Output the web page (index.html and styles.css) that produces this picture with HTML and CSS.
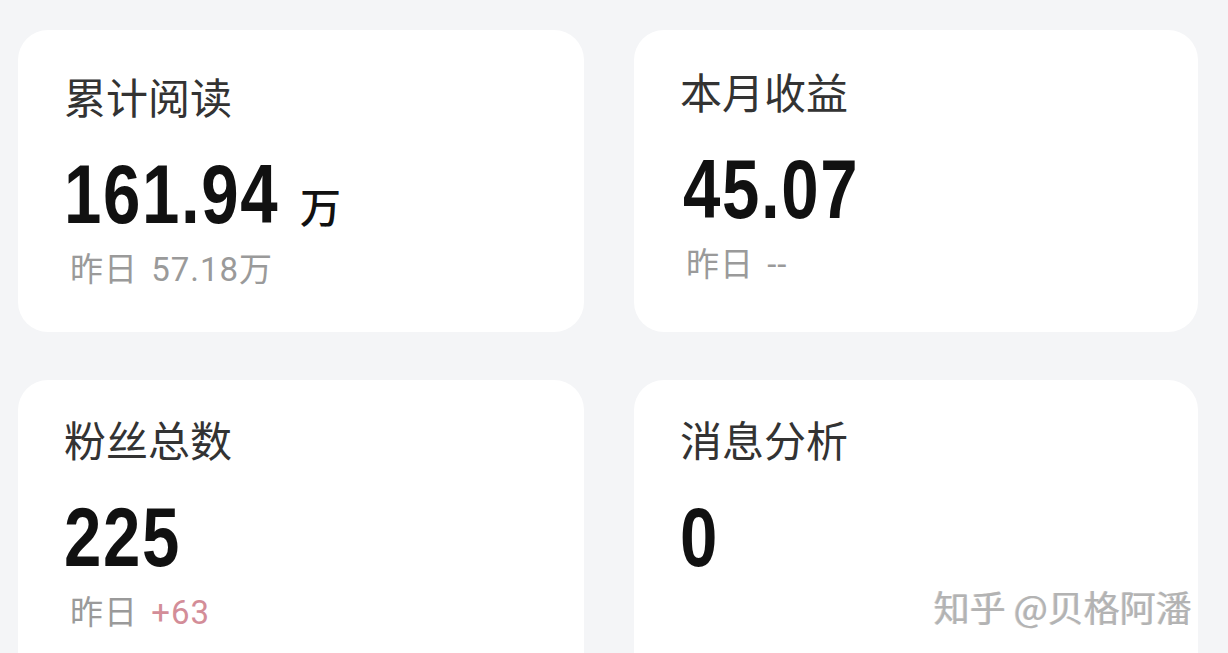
FILE: index.html
```html
<!DOCTYPE html>
<html lang="zh-CN">
<head>
<meta charset="utf-8">
<title>数据概览</title>
<link rel="stylesheet" href="styles.css">
</head>
<body>
<main class="grid">
  <section class="card card--top">
    <div class="label">累计阅读</div>
    <div class="value"><span class="num num--with-unit">161.94</span><span class="unit">万</span></div>
    <div class="sub">昨日 57.18万</div>
  </section>
  <section class="card card--top card--shift">
    <div class="label">本月收益</div>
    <div class="value"><span class="num">45.07</span></div>
    <div class="sub">昨日 --</div>
  </section>
  <section class="card card--bottom">
    <div class="label">粉丝总数</div>
    <div class="value"><span class="num">225</span></div>
    <div class="sub">昨日 <span class="up">+63</span></div>
  </section>
  <section class="card card--bottom">
    <div class="label">消息分析</div>
    <div class="value"><span class="num">0</span></div>
    <div class="watermark">知乎 @贝格阿潘</div>
  </section>
</main>
</body>
</html>
```
FILE: styles.css
```css
html, body {
  margin: 0;
  padding: 0;
  height: 100%;
  overflow: hidden;
  background: #f4f5f7;
  font-family: "Noto Sans CJK SC", "Noto Sans", sans-serif;
}

.grid {
  display: grid;
  grid-template-columns: 566px 564px;
  grid-template-rows: 302px 302px;
  column-gap: 50px;
  row-gap: 48px;
  padding: 30px 0 0 18px;
}

.card {
  position: relative;
  background: #ffffff;
  border-radius: 30px;
  padding-left: 46px;
  box-sizing: border-box;
}

.card--top {
  padding-top: 45px;
}

.card--shift {
  padding-top: 40px;
}

.card--bottom {
  padding-top: 38px;
}

.label {
  font-size: 42px;
  line-height: 42px;
  color: #333333;
}

.value {
  margin-top: 35px;
  display: flex;
  align-items: baseline;
  height: 84px;
}

.num {
  display: inline-block;
  font-family: "Liberation Sans", Arial, sans-serif;
  font-weight: 700;
  font-size: 84px;
  line-height: 84px;
  letter-spacing: 2px;
  color: #111111;
  transform: scaleX(0.8);
  transform-origin: 0 50%;
}

.card--shift .num {
  margin-left: 3px;
}

.num--with-unit {
  margin-right: -53px;
}

.unit {
  font-size: 41px;
  line-height: 41px;
  color: #111111;
  margin-left: 20px;
  font-weight: 500;
}

.sub {
  margin-top: 17px;
  margin-left: 6px;
  font-family: Roboto, "Noto Sans CJK SC", sans-serif;
  font-size: 33px;
  line-height: 33px;
  letter-spacing: 1px;
  word-spacing: 4px;
  color: #9a9a9a;
}

.up {
  color: #d38d98;
}

.watermark {
  position: absolute;
  left: 300px;
  top: 206px;
  font-size: 36px;
  line-height: 40px;
  color: #b3b3b3;
  text-shadow: 1px 1px 0 #ffffff, -1px 0 0 #cccccc;
  white-space: nowrap;
}
```
